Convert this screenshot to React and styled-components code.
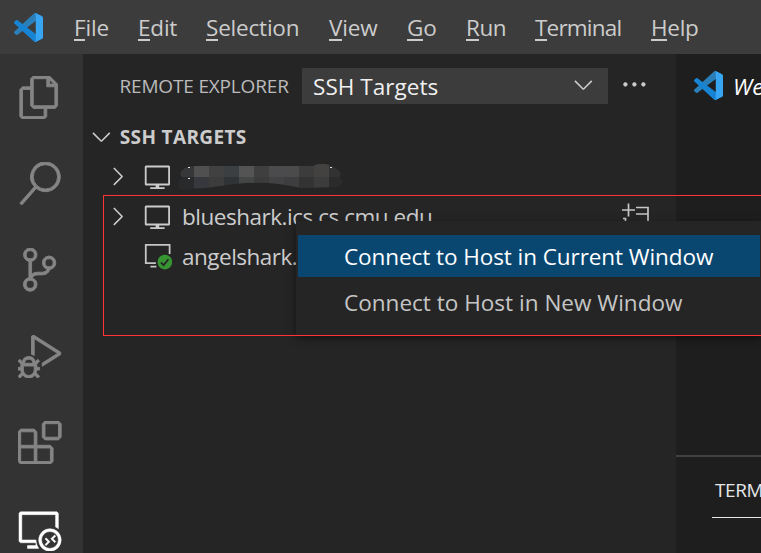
import React from 'react';
import styled, { createGlobalStyle } from 'styled-components';
import {
  VscFiles, VscSearch, VscSourceControl, VscDebugAlt, VscExtensions, VscRemoteExplorer,
  VscVm, VscChevronRight, VscChevronDown, VscEllipsis,
} from 'react-icons/vsc';

const Global = createGlobalStyle`
  * { box-sizing: border-box; }
  body { margin: 0; background: #1e1e1e; overflow: hidden; }
`;

const Window = styled.div`
  position: relative;
  width: 761px;
  height: 553px;
  overflow: hidden;
  display: flex;
  flex-direction: column;
  font-family: 'Open Sans', 'Noto Sans', sans-serif;
  font-size: 22.5px;
  color: #cccccc;
  white-space: nowrap;
`;

const TitleBar = styled.header`
  flex: none;
  height: 54px;
  background: #3c3c3c;
  display: flex;
  align-items: center;
  padding: 1px 0 0 14px;
`;

const MenuBar = styled.nav`
  display: flex;
  margin-left: 31px;
`;

const MenuItem = styled.span`
  width: ${(p) => p.$width}px;
  line-height: 32px;
  letter-spacing: ${(p) => p.$spacing}px;
`;

const Mnemonic = styled.span`
  display: inline-block;
  height: 27px;
  line-height: 28px;
  border-bottom: 2px solid #cccccc;
  vertical-align: top;
  margin-top: 2px;
`;

const Body = styled.div`
  flex: 1;
  min-height: 0;
  display: flex;
`;

const ActivityBar = styled.aside`
  flex: none;
  width: 83px;
  background: #333333;
  display: flex;
  flex-direction: column;
`;

const Activity = styled.div`
  flex: none;
  height: 86.4px;
  padding-right: 3px;
  display: flex;
  align-items: center;
  justify-content: center;
  color: ${(p) => (p.$active ? '#ffffff' : '#858585')};
  svg { width: 43.2px; height: 43.2px; }
  svg path {
    stroke: currentColor;
    stroke-width: ${(p) => (p.$active ? 0.5 : 0.9)}px;
    vector-effect: non-scaling-stroke;
  }
`;

const SideBar = styled.section`
  flex: none;
  width: 593px;
  background: #252526;
`;

const SideHeader = styled.div`
  display: flex;
  align-items: center;
  height: 63px;
  padding-left: 36.500px;
`;

const SideTitle = styled.span`
  width: 182.500px;
  font-size: 19px;
  letter-spacing: -0.17px;
  color: #bbbbbb;
`;

const Select = styled.div`
  width: 306px;
  height: 36px;
  background: #3c3c3c;
  color: #f0f0f0;
  display: flex;
  align-items: center;
  justify-content: space-between;
  padding: 1px 10px 0 11px;
  letter-spacing: 0.05px;
  svg { width: 28.8px; height: 28.8px; color: #cccccc; margin-top: -3px; }
`;

const More = styled.div`
  display: flex;
  margin-left: 12px;
  margin-top: -2px;
  svg { width: 28.8px; height: 28.8px; }
  svg path { stroke: currentColor; stroke-width: 0.8px; vector-effect: non-scaling-stroke; }
`;

const SectionHeader = styled.div`
  display: flex;
  align-items: center;
  height: 39px;
  padding-left: 4px;
  gap: 4px;
  font-size: 19px;
  font-weight: 700;
  letter-spacing: 0.35px;
  svg { width: 28.8px; height: 28.8px; }
`;

const Row = styled.div`
  display: flex;
  align-items: center;
  height: 40px;
  padding-left: 20px;
`;

const Twistie = styled.span`
  display: flex;
  width: 40px;
  svg { width: 28.8px; height: 28.8px; }
`;

const HostIcon = styled.span`
  display: flex;
  width: 39px;
  svg { width: 28.8px; height: 28.8px; }
`;

const HostName = styled.span`
  letter-spacing: ${(p) => p.$spacing}px;
  width: 439px;
`;

const Editor = styled.main`
  flex: 1;
  min-width: 0;
  overflow: hidden;
  background: #1e1e1e;
  display: flex;
  flex-direction: column;
`;

const Tab = styled.div`
  height: 63px;
  display: flex;
  align-items: center;
  gap: 10px;
  padding-left: 18px;
  font-style: italic;
  color: #ffffff;
`;

const TabLabel = styled.span`
  margin-top: 2px;
`;

const Panel = styled.div`
  margin-top: auto;
  height: 98px;
  border-top: 2px solid #414141;
  padding: 15px 0 0 36px;
`;

const PanelTab = styled.div`
  width: 110px;
  height: 46px;
  padding-left: 3px;
  line-height: 37px;
  font-size: 19px;
  letter-spacing: -0.4px;
  color: #e7e7e7;
  border-bottom: 1px solid #e7e7e7;
`;

const ContextMenu = styled.div`
  position: absolute;
  left: 296px;
  top: 221px;
  width: 466px;
  height: 114px;
  padding: 14px 2px;
  background: #252526;
  box-shadow: 0 3px 8px rgba(0, 0, 0, 0.5);
`;

const MenuAction = styled.div`
  height: 42px;
  margin-bottom: 4px;
  padding-left: 46px;
  line-height: 43px;
  letter-spacing: ${(p) => p.$spacing}px;
  background: ${(p) => (p.$selected ? '#094771' : 'transparent')};
  color: ${(p) => (p.$selected ? '#ffffff' : '#c5c5c5')};
`;

const Highlight = styled.div`
  position: absolute;
  left: 103px;
  top: 195px;
  width: 670px;
  height: 141px;
  border: 1px solid #ff3333;
  pointer-events: none;
`;

const LogoSvg = styled.svg`
  flex: none;
  width: 29px;
  height: 29px;
`;

const CodeLogo = () => (
  <LogoSvg viewBox="0 0 100 100">
    <path fill="#2b7fb9" d="M96.46 10.8 75.86.88A6.23 6.23 0 0 0 68.75 2.08L1.3 63.58a4.17 4.17 0 0 0 0 6.17l5.51 5c1.49 1.35 3.72 1.45 5.32.24l81.23-61.62c2.73-2.07 6.64-.13 6.64 3.3v-.24c0-2.4-1.38-4.6-3.54-5.63Z" />
    <path fill="#1684d3" d="M96.46 89.2 75.86 99.12a6.23 6.23 0 0 1-7.11-1.2L1.3 36.42a4.17 4.17 0 0 1 0-6.17l5.51-5c1.49-1.35 3.72-1.45 5.32-.24l81.23 61.62c2.73 2.07 6.64.13 6.64-3.3v.24c0 2.4-1.38 4.6-3.54 5.63Z" />
    <path fill="#38a5f3" d="M75.86 99.13a6.23 6.23 0 0 1-7.11-1.21C71.06 100.22 75 98.59 75 95.33V4.67C75 1.41 71.06-.22 68.75 2.08A6.23 6.23 0 0 1 75.86.87l20.6 9.91A6.25 6.25 0 0 1 100 16.41v67.18c0 2.4-1.38 4.59-3.54 5.63Z" />
  </LogoSvg>
);

const Tiles = styled.svg`
  flex: none;
  margin-left: -4px;
  margin-top: 3px;
`;

const upper = ['#353738', '#505051', '#414142', '#3b3f42', '#545454', '#403f40', '#4b4b4d', '#4b4b4c', '#3c3c3c', '#434240', '#323232'];
const lower = ['#292a2b', '#37383e', '#3d3c3d', '#303335', '#444645', '#3b3b3b', '#424244', '#3e3e40', '#333334', '#3d3c3d', '#2b2b2b'];

const RedactedName = () => (
  <Tiles width="166" height="28" viewBox="0 0 166 28">
    <defs>
      <clipPath id="stroke">
        <path d="M7 4Q12 2 17 2H135Q140-1 148 0Q156 2 160 6Q164 9 162 13Q168 19 161 23L123 24Q90 16 57 20L28 24Q15 24 9 26Q0 27 0 20Q0 16 5 14Q-1 9 7 4Z" />
      </clipPath>
    </defs>
    <g clipPath="url(#stroke)" shapeRendering="crispEdges">
      {upper.map((c, i) => <rect key={i} x={1 + i * 15} y="0" width="15" height="13" fill={c} />)}
      {lower.map((c, i) => <rect key={i} x={1 + i * 15} y="13" width="15" height="15" fill={c} />)}
    </g>
    <path fill="#dddddd" d="M10 3h2v1h-2zM10 14h2v1h-2zM152 3h2v1h-2z" />
  </Tiles>
);

const ConnectedHost = () => (
  <svg viewBox="0 0 29 29" fill="none">
    <path stroke="#c5c5c5" strokeWidth="1.8" d="M26.800 12V3H2.800v18.200H13M7.500 24.700h6" />
    <circle cx="22" cy="20.200" r="8.300" fill="#252526" />
    <circle cx="22" cy="20.200" r="7.400" fill="#369432" />
    <path stroke="#252526" strokeWidth="1.700" d="m18 20.500 2.800 2.800 4.800-6" />
  </svg>
);

const NewWindow = () => (
  <svg width="29" height="29" viewBox="0 0 29 29" fill="none" stroke="#c5c5c5" strokeWidth="1.7">
    <path d="M1 8h13M7.500 1.500v13M15 5.500h12v15M15 12h12M2 16.500h2.500v4" />
  </svg>
);

const menus = [
  ['File', 64, -0.2], ['Edit', 68, -0.2], ['Selection', 123, -0.2], ['View', 78, -0.2],
  ['Go', 59, -0.2], ['Run', 69, -0.5], ['Terminal', 116, -0.8], ['Help', 70, -0.3],
];

const activities = [VscFiles, VscSearch, VscSourceControl, VscDebugAlt, VscExtensions, VscRemoteExplorer];

export default function App() {
  return (
    <Window>
      <Global />
      <TitleBar>
        <CodeLogo />
        <MenuBar>
          {menus.map(([label, width, spacing]) => (
            <MenuItem key={label} $width={width} $spacing={spacing}>
              <Mnemonic>{label[0]}</Mnemonic>{label.slice(1)}
            </MenuItem>
          ))}
        </MenuBar>
      </TitleBar>
      <Body>
        <ActivityBar>
          {activities.map((Icon, i) => (
            <Activity key={i} $active={i === 5}><Icon /></Activity>
          ))}
        </ActivityBar>
        <SideBar>
          <SideHeader>
            <SideTitle>REMOTE EXPLORER</SideTitle>
            <Select>SSH Targets<VscChevronDown /></Select>
            <More><VscEllipsis /></More>
          </SideHeader>
          <SectionHeader><VscChevronDown />SSH TARGETS</SectionHeader>
          <Row>
            <Twistie><VscChevronRight /></Twistie>
            <HostIcon><VscVm /></HostIcon>
            <RedactedName />
          </Row>
          <Row>
            <Twistie><VscChevronRight /></Twistie>
            <HostIcon><VscVm /></HostIcon>
            <HostName $spacing={-0.48}>blueshark.ics.cs.cmu.edu</HostName>
            <NewWindow />
          </Row>
          <Row>
            <Twistie />
            <HostIcon><ConnectedHost /></HostIcon>
            <HostName $spacing={-0.5}>angelshark.</HostName>
          </Row>
        </SideBar>
        <Editor>
          <Tab><CodeLogo /><TabLabel>Welcome</TabLabel></Tab>
          <Panel><PanelTab>TERMINAL</PanelTab></Panel>
        </Editor>
      </Body>
      <ContextMenu>
        <MenuAction $selected $spacing={-0.07}>Connect to Host in Current Window</MenuAction>
        <MenuAction $spacing={0.02}>Connect to Host in New Window</MenuAction>
      </ContextMenu>
      <Highlight />
    </Window>
  );
}
